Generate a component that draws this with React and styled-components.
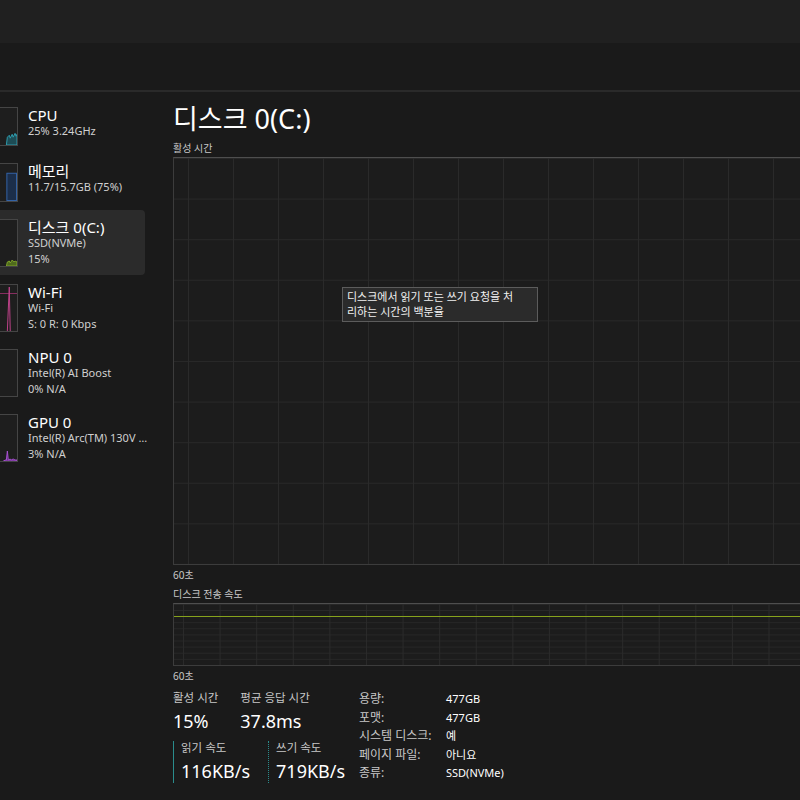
import React from 'react';
import styled, { createGlobalStyle } from 'styled-components';

const GlobalStyle = createGlobalStyle`
  html, body {
    margin: 0;
    padding: 0;
    background: #1a1a1a;
    overflow: hidden;
  }
  body {
    font-family: "Noto Sans", "Noto Sans CJK KR", sans-serif;
    color: #ffffff;
  }
`;

const Window = styled.div`
  width: 800px;
  height: 800px;
  overflow: hidden;
  background: #1a1a1a;
`;

const TitleBar = styled.div`
  height: 43px;
  background: #202020;
`;

const CommandBar = styled.div`
  height: 47px;
  border-bottom: 2px solid #2a2a2a;
`;

const Body = styled.div`
  display: flex;
  gap: 28px;
`;

const Sidebar = styled.div`
  width: 185px;
  margin-left: -40px;
  padding-top: 6px;
  display: flex;
  flex-direction: column;
  flex-shrink: 0;
`;

const NavItem = styled.div`
  display: flex;
  gap: 10px;
  padding: 9px 0 8px;
  background: ${p => (p.$active ? '#2b2b2b' : 'transparent')};
  border-radius: 0 4px 4px 0;
`;

const Thumb = styled.div`
  width: 58px;
  flex-shrink: 0;
  border: 1px solid #454545;
  background: #1e1e1e;
  box-sizing: border-box;
  display: flex;

  svg {
    width: 100%;
    height: 100%;
    display: block;
  }
`;

const NavText = styled.div`
  display: flex;
  flex-direction: column;
  flex: none;
  width: 122px;
  min-height: 39px;
`;

const NavTitle = styled.div`
  font-size: 15px;
  line-height: 16px;
  color: #ffffff;
  white-space: nowrap;
`;

const NavSub = styled.div`
  font-size: 11px;
  line-height: 16px;
  color: #d0d0d0;
  white-space: nowrap;
  overflow: hidden;
  text-overflow: ellipsis;
`;

const Main = styled.div`
  flex: 1;
  min-width: 0;
  padding-top: 11px;
  overflow: hidden;
`;

const PageTitle = styled.h1`
  margin: 0;
  font-size: 27px;
  font-weight: 400;
  line-height: 32px;
  color: #ffffff;
`;

const ChartLabel = styled.div`
  font-size: 10px;
  line-height: 14px;
  color: #c8c8c8;
  margin-top: ${p => p.$gap || 0}px;
`;

const Chart = styled.div`
  position: relative;
  width: 680px;
  height: ${p => p.$h}px;
  margin-top: 2px;
  box-sizing: border-box;
  border: 1px solid #3c3c3c;
  border-top-color: #4e4e4e;
  background-color: #1c1c1c;
  background-image:
    linear-gradient(to right, #2a2a2a 1px, transparent 1px),
    linear-gradient(to bottom, #282828 1px, transparent 1px);
  background-size: ${p => p.$cols}px 100%, 100% 10%;
  background-position: ${p => p.$offset}px 0, 0 0;
`;

const SeriesLine = styled.div`
  margin-top: ${p => p.$top}px;
  height: 1px;
  background: #86a21c;
`;

const Tooltip = styled.div`
  position: absolute;
  left: 168px;
  top: 129px;
  width: 186px;
  padding: 2px 4px;
  background: #2b2b2b;
  border: 1px solid #5c5c5c;
  font-size: 11px;
  line-height: 14.5px;
  color: #f0f0f0;
`;

const Stats = styled.div`
  display: flex;
  margin-top: 8px;
`;

const StatsLeft = styled.div`
  width: 186px;
  flex-shrink: 0;
  display: flex;
  flex-direction: column;
  gap: 8px;
`;

const StatRow = styled.div`
  display: flex;
  gap: ${p => p.$gap}px;
`;

const Stat = styled.div`
  display: flex;
  flex-direction: column;
  padding-left: ${p => (p.$bar ? 7 : 0)}px;
  border-left: ${p => (p.$bar === 'solid' ? '1px solid #2a8c8c' : p.$bar === 'dotted' ? '1px dotted #2a8c8c' : 'none')};
`;

const StatLabel = styled.div`
  font-size: 11.5px;
  line-height: 14px;
  color: #c8c8c8;
`;

const StatValue = styled.div`
  font-size: 18px;
  line-height: 24px;
  margin-top: 4px;
  color: #ffffff;
`;

const Props = styled.div`
  display: grid;
  grid-template-columns: 87px auto;
  line-height: 17.5px;
  margin-top: -1px;
`;

const PropKey = styled.div`
  font-size: 12px;
  color: #c8c8c8;
  white-space: nowrap;
`;

const PropVal = styled.div`
  font-size: 11px;
  color: #ffffff;
`;

const thumbs = {
  cpu: (
    <svg viewBox="0 0 58 38" preserveAspectRatio="none">
      <path d="M47 38 L48 30 L50 28 L51 31 L53 27 L54 30 L56 26 L57 29 L58 27 L58 38 Z" fill="#1d4c55" stroke="#2e9cad" strokeWidth="1" />
    </svg>
  ),
  mem: (
    <svg viewBox="0 0 58 38" preserveAspectRatio="none">
      <rect x="47.5" y="9.5" width="10" height="28" fill="#1b2e4a" stroke="#3464a8" strokeWidth="1" />
    </svg>
  ),
  disk: (
    <svg viewBox="0 0 58 46" preserveAspectRatio="none">
      <path d="M47 46 L48 42 L50 41 L51 43 L53 40 L55 42 L56 41 L58 42 L58 46 Z" fill="#4f6b1c" stroke="#7ea22a" strokeWidth="1" />
    </svg>
  ),
  wifi: (
    <svg viewBox="0 0 58 46" preserveAspectRatio="none">
      <line x1="40" y1="8.5" x2="58" y2="8.5" stroke="#8a2f62" strokeWidth="1" />
      <path d="M48 46 L50 2 L51 46" fill="none" stroke="#c0428a" strokeWidth="1" />
    </svg>
  ),
  npu: <svg viewBox="0 0 58 46" preserveAspectRatio="none" />,
  gpu: (
    <svg viewBox="0 0 58 46" preserveAspectRatio="none">
      <path d="M44 46 L46 45 L47 45 L48 36 L49 45 L51 44 L52 45 L54 44 L56 45 L58 45 L58 46 Z" fill="#5e2a7a" stroke="#a651d0" strokeWidth="1" />
    </svg>
  ),
};

const navItems = [
  { id: 'cpu', title: 'CPU', lines: ['25%  3.24GHz'] },
  { id: 'mem', title: '메모리', lines: ['11.7/15.7GB (75%)'] },
  { id: 'disk', title: '디스크 0(C:)', lines: ['SSD(NVMe)', '15%'], active: true },
  { id: 'wifi', title: 'Wi-Fi', lines: ['Wi-Fi', 'S: 0  R: 0 Kbps'] },
  { id: 'npu', title: 'NPU 0', lines: ['Intel(R) AI Boost', '0%  N/A'] },
  { id: 'gpu', title: 'GPU 0', lines: ['Intel(R) Arc(TM) 130V GPU (16GB)', '3%  N/A'] },
];

const props = [
  ['용량:', '477GB'],
  ['포맷:', '477GB'],
  ['시스템 디스크:', '예'],
  ['페이지 파일:', '아니요'],
  ['종류:', 'SSD(NVMe)'],
];

export default function App() {
  return (
    <Window>
      <GlobalStyle />
      <TitleBar />
      <CommandBar />
      <Body>
        <Sidebar>
          {navItems.map(item => (
            <NavItem key={item.id} $active={item.active}>
              <Thumb>{thumbs[item.id]}</Thumb>
              <NavText>
                <NavTitle>{item.title}</NavTitle>
                {item.lines.map(l => (
                  <NavSub key={l}>{l}</NavSub>
                ))}
              </NavText>
            </NavItem>
          ))}
        </Sidebar>
        <Main>
          <PageTitle>디스크 0(C:)</PageTitle>
          <ChartLabel $gap={6}>활성 시간</ChartLabel>
          <Chart $h={408} $cols={45} $offset={14}>
            <Tooltip>
              디스크에서 읽기 또는 쓰기 요청을 처<br />
              리하는 시간의 백분율
            </Tooltip>
          </Chart>
          <ChartLabel $gap={3}>60초</ChartLabel>
          <ChartLabel $gap={5}>디스크 전송 속도</ChartLabel>
          <Chart $h={63} $cols={36.6} $offset={9}>
            <SeriesLine $top={12} />
          </Chart>
          <ChartLabel $gap={3}>60초</ChartLabel>
          <Stats>
            <StatsLeft>
              <StatRow $gap={22}>
                <Stat>
                  <StatLabel>활성 시간</StatLabel>
                  <StatValue>15%</StatValue>
                </Stat>
                <Stat>
                  <StatLabel>평균 응답 시간</StatLabel>
                  <StatValue>37.8ms</StatValue>
                </Stat>
              </StatRow>
              <StatRow $gap={18}>
                <Stat $bar="solid">
                  <StatLabel>읽기 속도</StatLabel>
                  <StatValue>116KB/s</StatValue>
                </Stat>
                <Stat $bar="dotted">
                  <StatLabel>쓰기 속도</StatLabel>
                  <StatValue>719KB/s</StatValue>
                </Stat>
              </StatRow>
            </StatsLeft>
            <Props>
              {props.map(([k, v]) => (
                <React.Fragment key={k}>
                  <PropKey>{k}</PropKey>
                  <PropVal>{v}</PropVal>
                </React.Fragment>
              ))}
            </Props>
          </Stats>
        </Main>
      </Body>
    </Window>
  );
}
